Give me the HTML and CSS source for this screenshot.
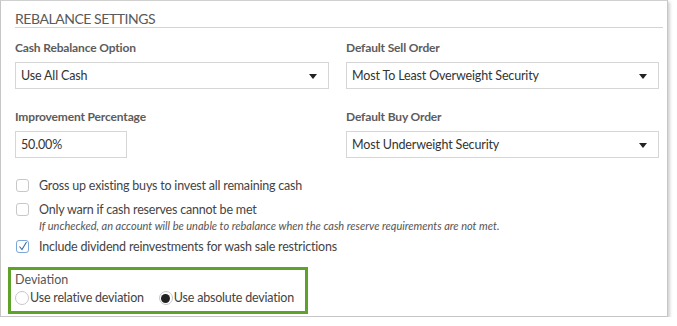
FILE: index.html
```html
<!DOCTYPE html>
<html lang="en">
  <head>
    <meta charset="UTF-8" />
    <title>Rebalance Settings</title>
    <link rel="stylesheet" href="styles.css">
  </head>
  <body>
    <div class="panel">
      <h2 class="panel-title">REBALANCE SETTINGS</h2>

      <div class="fields">
        <div class="field">
          <label class="field-label">Cash Rebalance Option</label>
          <div class="select">Use All Cash<span class="caret"></span></div>
        </div>
        <div class="field">
          <label class="field-label">Default Sell Order</label>
          <div class="select">Most To Least Overweight Security<span class="caret"></span></div>
        </div>
        <div class="field">
          <label class="field-label">Improvement Percentage</label>
          <div class="text-input">50.00%</div>
        </div>
        <div class="field">
          <label class="field-label">Default Buy Order</label>
          <div class="select">Most Underweight Security<span class="caret"></span></div>
        </div>
      </div>

      <div class="checks">
        <label class="check">
          <span class="box"></span>
          Gross up existing buys to invest all remaining cash
        </label>
        <label class="check">
          <span class="box"></span>
          Only warn if cash reserves cannot be met
        </label>
        <div class="note">If unchecked, an account will be unable to rebalance when the cash reserve requirements are not met.</div>
        <label class="check">
          <span class="box checked">
            <svg width="10" height="10" viewBox="0 0 10 10"><path d="M1.5 5.5 L4 8.5 L8.5 1" fill="none" stroke="#3a6ea5" stroke-width="1.1"/></svg>
          </span>
          Include dividend reinvestments for wash sale restrictions
        </label>
      </div>

      <div class="deviation">
        <div class="deviation-label">Deviation</div>
        <div class="radios">
          <label class="radio"><span class="dot"></span>Use relative deviation</label>
          <label class="radio"><span class="dot on"></span>Use absolute deviation</label>
        </div>
      </div>
    </div>
  </body>
</html>
```

FILE: styles.css
```css
body {
  margin: 0;
  background: #fff;
  font-family: Lato, "Open Sans", sans-serif;
  color: #444;
}
.panel {
  width: 652px;
  height: 315px;
  padding: 0 0 0 14px;
  border: 1px solid #c6c6c6;
  border-top-color: #d0d0d0;
  box-shadow: 2px 2px 3px rgba(0, 0, 0, 0.18);
  position: relative;
}
.panel-title {
  margin: 0 4px 0 0;
  padding: 11px 0 1px 0;
  font-size: 14px;
  font-weight: 400;
  line-height: 14px;
  color: #5a5a5a;
  border-bottom: 1px solid #d4d4d4;
  letter-spacing: -0.45px;
}
.fields {
  display: grid;
  grid-template-columns: 314px 313px;
  column-gap: 17px;
  row-gap: 20px;
  padding: 12px 0 0 0;
}
.field-label {
  display: block;
  font-size: 12px;
  font-weight: 700;
  color: #5c5c5c;
  line-height: 16px;
  margin-bottom: 6px;
  letter-spacing: -0.15px;
}
.select,
.text-input {
  box-sizing: border-box;
  height: 27px;
  border: 1px solid #d6d6d6;
  padding: 0 0 0 5px;
  font-size: 12.5px;
  line-height: 25px;
  color: #333;
  letter-spacing: -0.15px;
  position: relative;
}
.text-input {
  width: 112px;
}
.caret {
  position: absolute;
  right: 11px;
  top: 11px;
  width: 0;
  height: 0;
  border-left: 4px solid transparent;
  border-right: 4px solid transparent;
  border-top: 5px solid #222;
}
.checks {
  padding: 15px 0 0 0;
}
.check {
  display: flex;
  align-items: center;
  height: 24px;
  font-size: 12.5px;
  letter-spacing: -0.2px;
  color: #444;
}
.box {
  box-sizing: border-box;
  width: 13px;
  height: 13px;
  border: 1px solid #c8c8c8;
  border-radius: 3px;
  margin: 0 10px 0 1px;
  display: flex;
  align-items: center;
  justify-content: center;
}
.box.checked {
  border-color: #7aa7d8;
}
.note {
  font-size: 11px;
  font-style: italic;
  color: #555;
  margin: -4px 0 0 24px;
  line-height: 17px;
}
.deviation {
  position: absolute;
  left: 7px;
  top: 266px;
  width: 290px;
  height: 39px;
  border: 3px solid #5ea229;
  padding: 2px 0 0 4px;
}
.deviation-label {
  font-size: 12.5px;
  color: #555;
  line-height: 16px;
}
.radios {
  display: flex;
  gap: 15px;
  margin-top: 1px;
  white-space: nowrap;
  letter-spacing: -0.2px;
}
.radio {
  display: flex;
  align-items: center;
  font-size: 12.5px;
  color: #444;
  line-height: 18px;
}
.dot {
  box-sizing: border-box;
  width: 14px;
  height: 14px;
  border: 1px solid #c8c8c8;
  border-radius: 50%;
  margin-right: 1px;
  display: flex;
  align-items: center;
  justify-content: center;
}
.dot.on::after {
  content: "";
  width: 9px;
  height: 9px;
  border-radius: 50%;
  background: #222;
}
```
